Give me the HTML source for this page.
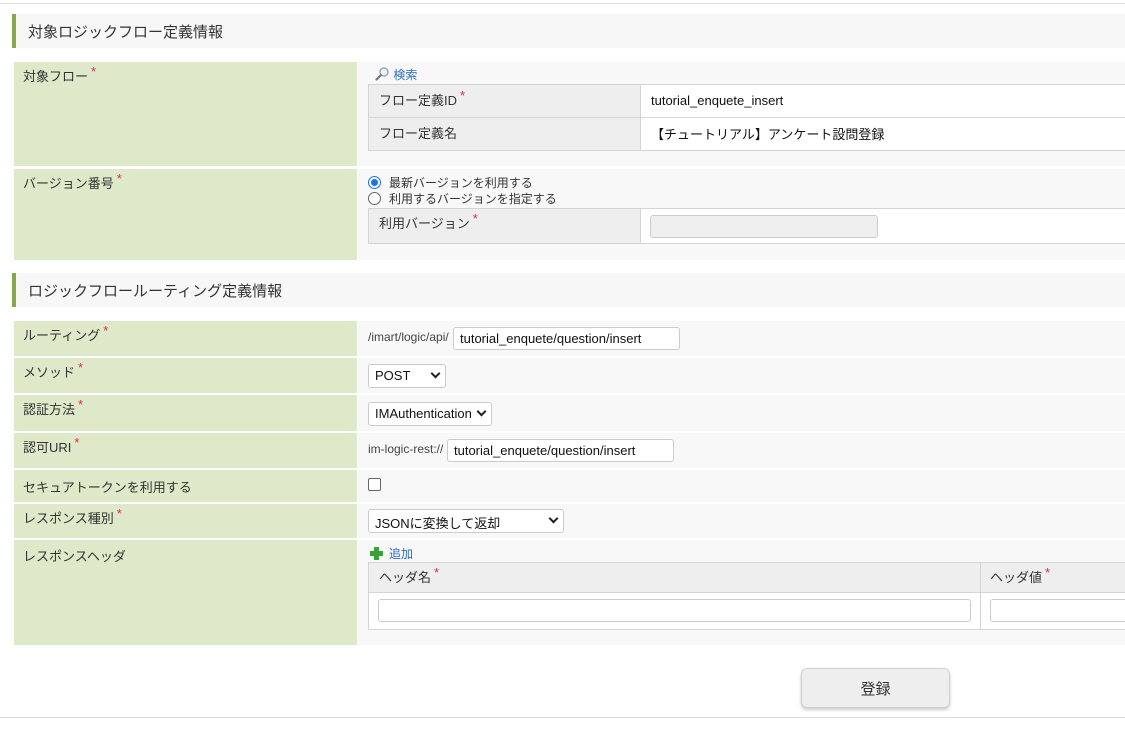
<!DOCTYPE html>
<html><head><meta charset="utf-8"><style>
*{box-sizing:border-box;margin:0;padding:0}
body{width:1125px;height:730px;background:#fff;font-family:"Liberation Sans","Noto Sans CJK JP",sans-serif;font-size:13px;color:#333;position:relative;overflow:hidden}
.a{position:absolute}
.hl{left:0;width:1125px;height:1px;background:#ddd}
.sec{left:12px;width:1113px;height:34px;background:#f7f7f7;border-left:4px solid #85a94a;font-size:15px;padding:7px 0 0 12px;color:#333}
.lab{left:14px;width:343px;background:#dde9c8;padding:4px 0 0 9px}
.val{left:358px;width:767px;background:#f8f8f8}
.req{color:#e0245e;font-size:13px;position:relative;top:-5px;margin-left:3px}
.tb{border:1px solid #d4d4d4}
.inp{background:#fff;border:1px solid #ccc;border-radius:3px;height:23px;padding:3px 6px;font-size:13px;color:#111}
.sel{background:#fff;border:1px solid #ccc;border-radius:3px;height:24px;padding:3px 6px;font-size:13px;color:#111}
.chev{position:absolute;right:6px;top:5px;width:7px;height:7px;border-right:2px solid #222;border-bottom:2px solid #222;transform:rotate(45deg)}
.small{font-size:12px;color:#444}
.link{color:#2a6fc4}
</style></head><body>
<div class="a hl" style="top:3px"></div>
<div class="a sec" style="top:14px">対象ロジックフロー定義情報</div>

<div class="a lab" style="top:62px;height:104px">対象フロー<span class="req">*</span></div>
<div class="a val" style="top:62px;height:104px">
  <div class="a" style="left:17px;top:4px;font-size:12px"><svg width="15" height="14" viewBox="0 0 15 14" style="vertical-align:-2px"><circle cx="9" cy="5" r="4" fill="#eef4fb" stroke="#8aa0b8" stroke-width="1.3"/><line x1="6" y1="8" x2="1.5" y2="12.5" stroke="#777" stroke-width="2.2" stroke-linecap="round"/></svg> <span class="link">検索</span></div>
  <div class="a tb" style="left:10px;top:22px;width:760px;height:67px">
    <div class="a" style="left:0;top:0;width:272px;height:33px;background:#eee;border-bottom:1px solid #d4d4d4;border-right:1px solid #d4d4d4;padding:5px 0 0 10px">フロー定義ID<span class="req">*</span></div>
    <div class="a" style="left:272px;top:0;width:490px;height:33px;background:#fff;border-bottom:1px solid #d4d4d4;padding:8px 0 0 10px;color:#111">tutorial_enquete_insert</div>
    <div class="a" style="left:0;top:33px;width:272px;height:32px;background:#eee;border-right:1px solid #d4d4d4;padding:5px 0 0 10px">フロー定義名</div>
    <div class="a" style="left:272px;top:33px;width:490px;height:32px;background:#fff;padding:6px 0 0 10px;color:#111">【チュートリアル】アンケート設問登録</div>
  </div>
</div>

<div class="a lab" style="top:169px;height:91px">バージョン番号<span class="req">*</span></div>
<div class="a val" style="top:169px;height:91px">
  <div class="a" style="left:10px;top:6px;font-size:12px;line-height:16px">
    <div><span style="display:inline-block;width:13px;height:13px;border-radius:50%;border:1px solid #1a73e8;vertical-align:-2px;position:relative;margin-right:8px"><span style="position:absolute;left:2px;top:2px;width:7px;height:7px;border-radius:50%;background:#1a73e8"></span></span>最新バージョンを利用する</div>
    <div><span style="display:inline-block;width:13px;height:13px;border-radius:50%;border:1px solid #666;vertical-align:-2px;margin-right:8px;background:#fff"></span>利用するバージョンを指定する</div>
  </div>
  <div class="a tb" style="left:10px;top:39px;width:760px;height:36px">
    <div class="a" style="left:0;top:0;width:272px;height:34px;background:#eee;border-right:1px solid #d4d4d4;padding:4px 0 0 10px">利用バージョン<span class="req">*</span></div>
    <div class="a" style="left:272px;top:0;width:490px;height:34px;background:#fff"><div class="a" style="left:9px;top:6px;width:228px;height:23px;background:#efefef;border:1px solid #ccc;border-radius:3px"></div></div>
  </div>
</div>

<div class="a sec" style="top:273px">ロジックフロールーティング定義情報</div>

<div class="a lab" style="top:321px;height:35px">ルーティング<span class="req">*</span></div>
<div class="a val" style="top:321px;height:35px"><span class="a small" style="left:10px;top:9px">/imart/logic/api/</span><div class="a inp" style="left:95px;top:6px;width:227px">tutorial_enquete/question/insert</div></div>

<div class="a lab" style="top:358px;height:35px">メソッド<span class="req">*</span></div>
<div class="a val" style="top:358px;height:35px"><div class="a sel" style="left:10px;top:6px;width:78px">POST<span class="chev"></span></div></div>

<div class="a lab" style="top:395px;height:36px">認証方法<span class="req">*</span></div>
<div class="a val" style="top:395px;height:36px"><div class="a sel" style="left:10px;top:7px;width:124px">IMAuthentication<span class="chev"></span></div></div>

<div class="a lab" style="top:433px;height:35px">認可URI<span class="req">*</span></div>
<div class="a val" style="top:433px;height:35px"><span class="a small" style="left:10px;top:9px">im-logic-rest://</span><div class="a inp" style="left:89px;top:6px;width:227px">tutorial_enquete/question/insert</div></div>

<div class="a lab" style="top:470px;height:32px;padding-top:7px">セキュアトークンを利用する</div>
<div class="a val" style="top:470px;height:32px"><div class="a" style="left:10px;top:8px;width:13px;height:13px;border:1px solid #666;border-radius:2px;background:#fff"></div></div>

<div class="a lab" style="top:504px;height:34px">レスポンス種別<span class="req">*</span></div>
<div class="a val" style="top:504px;height:34px"><div class="a sel" style="left:10px;top:5px;width:196px">JSONに変換して返却<span class="chev"></span></div></div>

<div class="a lab" style="top:540px;height:105px;padding-top:6px">レスポンスヘッダ</div>
<div class="a val" style="top:540px;height:105px">
  <div class="a" style="left:12px;top:5px;font-size:12px"><span style="display:inline-block;width:13px;height:13px;position:relative;vertical-align:-2px;margin-right:6px"><span class="a" style="left:4px;top:0;width:5px;height:13px;background:#3aa03a"></span><span class="a" style="left:0;top:4px;width:13px;height:5px;background:#3aa03a"></span></span><span class="link">追加</span></div>
  <div class="a tb" style="left:10px;top:22px;width:760px;height:68px">
    <div class="a" style="left:0;top:0;width:612px;height:30px;background:#eee;border-bottom:1px solid #d4d4d4;border-right:1px solid #d4d4d4;padding:4px 0 0 10px">ヘッダ名<span class="req">*</span></div>
    <div class="a" style="left:612px;top:0;width:150px;height:30px;background:#eee;border-bottom:1px solid #d4d4d4;padding:4px 0 0 9px">ヘッダ値<span class="req">*</span></div>
    <div class="a" style="left:0;top:30px;width:612px;height:36px;background:#fff;border-right:1px solid #d4d4d4"><div class="a inp" style="left:9px;top:6px;width:593px"></div></div>
    <div class="a" style="left:612px;top:30px;width:150px;height:36px;background:#fff"><div class="a inp" style="left:9px;top:6px;width:200px"></div></div>
  </div>
</div>

<div class="a" style="left:801px;top:668px;width:149px;height:40px;background:#eee;border:1px solid #d0d0d0;border-radius:6px;box-shadow:0 2px 3px rgba(0,0,0,.2);text-align:center;padding-top:9px;font-size:15px">登録</div>
<div class="a hl" style="top:717px"></div>
</body></html>
